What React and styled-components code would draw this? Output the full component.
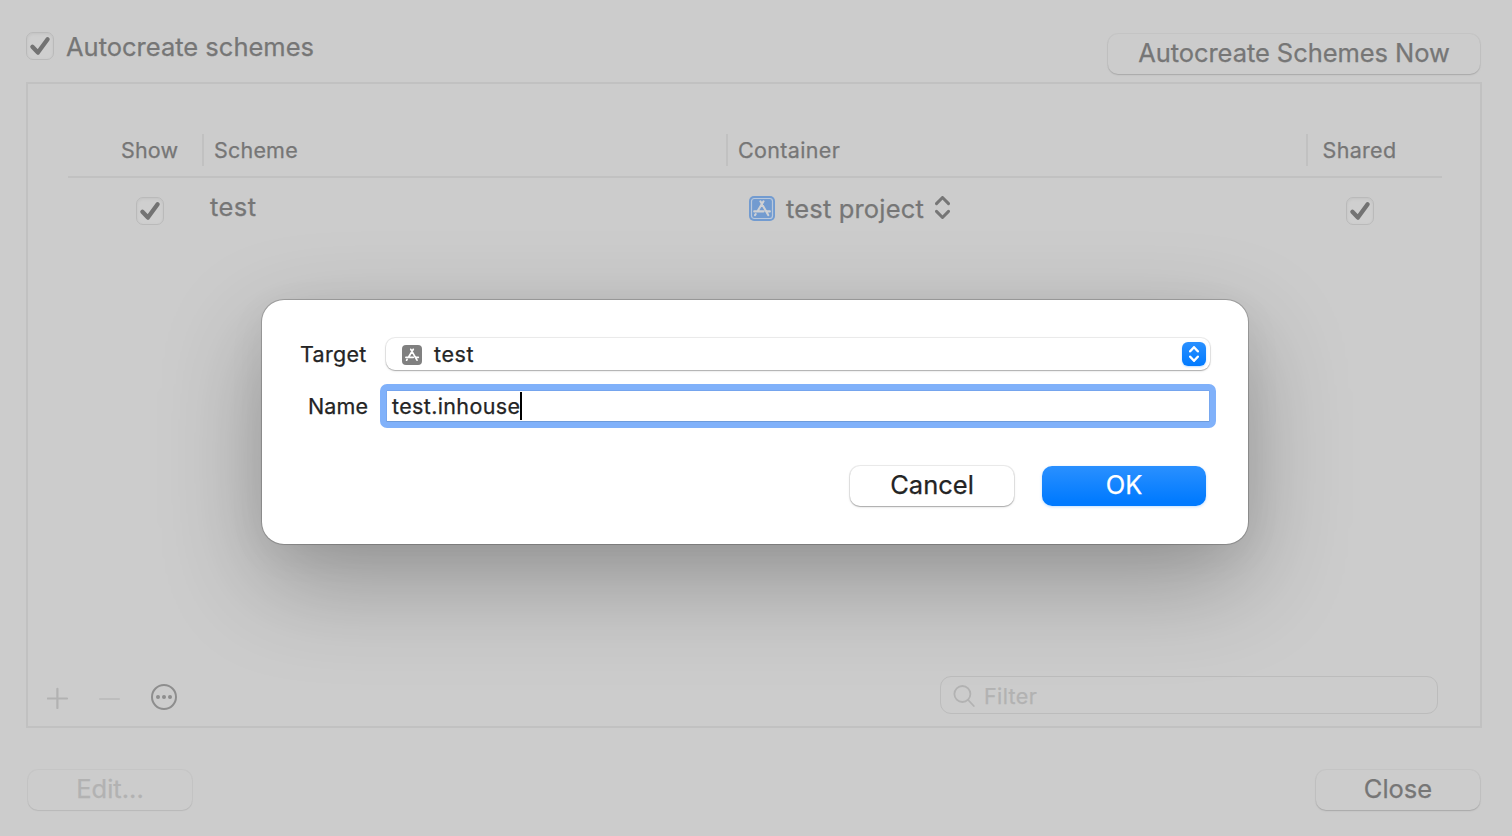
import React from "react";
import styled, { createGlobalStyle } from "styled-components";

const Global = createGlobalStyle`
  * { box-sizing: border-box; }
  body { margin: 0; background: #cccccc; overflow: hidden; }
`;

const Window = styled.div`
  position: relative;
  width: 1512px;
  height: 836px;
  padding: 32px 32px 25px 26px;
  display: flex;
  flex-direction: column;
  background: #cccccc;
  color: #767676;
  font-family: Inter, "Liberation Sans", sans-serif;
`;

const Text = styled.span`
  font-size: ${(p) => p.$size}px;
  font-weight: 440;
  letter-spacing: ${(p) => p.$track || 0}px;
  line-height: ${(p) => p.$line || 32}px;
  white-space: nowrap;
  -webkit-text-stroke: 0.25px currentColor;
`;

const TopBar = styled.header`
  display: flex;
  justify-content: space-between;
  align-items: flex-start;
  height: 50px;
`;

const CheckLabel = styled.label`
  display: flex;
  gap: 12px;
  height: 30px;
`;

const Box = styled.span`
  display: grid;
  place-items: center;
  width: 28px;
  height: 28px;
  border: 1px solid #bababa;
  border-radius: 7px;
  background: #cfcfcf;
  box-shadow: inset 0 1px 3px #c2c2c2;
`;

const Button = styled.button`
  display: flex;
  align-items: center;
  justify-content: center;
  width: ${(p) => p.$width}px;
  height: 40px;
  margin: 0;
  padding: 0 0 2px;
  border: 0;
  border-radius: 10px;
  font-family: inherit;
  color: ${(p) => (p.$faint ? "#b2b2b2" : "#767676")};
  background: #cccccc;
  box-shadow: 0 0 0 1px rgba(0, 0, 0, 0.03),
    0 1px 1px rgba(0, 0, 0, ${(p) => (p.$faint ? 0.05 : 0.1)}),
    0 1px 3px rgba(0, 0, 0, ${(p) => (p.$faint ? 0.02 : 0.05)});
`;

const AutoButton = styled(Button)`
  margin-top: 2px;
`;

const Panel = styled.section`
  display: flex;
  flex-direction: column;
  width: 1456px;
  height: 646px;
  padding: 50px 38px 12px 40px;
  border: 2px solid #c1c1c1;
`;

const Head = styled.div`
  display: flex;
  height: 44px;
  border-bottom: 2px solid #c1c1c1;
`;

const HeadCell = styled.div`
  width: ${(p) => p.$width}px;
  height: 32px;
  padding-left: ${(p) => p.$pad}px;
  border-left: ${(p) => (p.$first ? "0" : "2px solid #c1c1c1")};
`;

const Row = styled.div`
  display: flex;
  height: 60px;
`;

const Cell = styled.div`
  display: flex;
  align-items: flex-start;
  width: ${(p) => p.$width}px;
  padding: ${(p) => p.$top}px 0 0 ${(p) => p.$pad}px;
  gap: ${(p) => p.$gap || 0}px;
`;

const PanelFooter = styled.footer`
  display: flex;
  justify-content: space-between;
  align-items: center;
  margin-top: auto;
  padding: 0 4px 0 0;
  height: 38px;
  margin-left: -21px;
`;

const Tools = styled.div`
  display: flex;
  align-items: center;
  gap: 30px;
  padding-top: 3px;
`;

const FilterField = styled.div`
  display: flex;
  align-items: center;
  gap: 9px;
  width: 498px;
  height: 38px;
  padding: 1px 0 0 12px;
  border: 1px solid #bcbcbc;
  border-radius: 11px;
  color: #b2b2b2;
`;

const BottomBar = styled.footer`
  display: flex;
  justify-content: space-between;
  padding: 0 0 0 2px;
  margin-top: 42px;
`;

const Dialog = styled.div`
  position: absolute;
  left: 262px;
  top: 300px;
  width: 986px;
  height: 244px;
  padding: 38px 32px 38px 38px;
  display: flex;
  flex-direction: column;
  border-radius: 22px;
  background: #ffffff;
  color: #242424;
  box-shadow: 0 0 0 1px rgba(0, 0, 0, 0.17), 0 0 2px rgba(0, 0, 0, 0.12),
    0 36px 100px rgba(0, 0, 0, 0.28), 0 10px 40px rgba(0, 0, 0, 0.05);
`;

const Field = styled.div`
  display: flex;
  align-items: center;
  height: ${(p) => p.$height}px;
  margin-bottom: ${(p) => p.$after}px;
`;

const FieldLabel = styled.div`
  flex-shrink: 0;
  width: ${(p) => p.$width}px;
  padding-left: ${(p) => p.$pad}px;
  display: flex;
`;

const Select = styled.div`
  display: flex;
  align-items: center;
  width: 824px;
  height: 32px;
  padding: 0 4px 0 16px;
  border-radius: 9px;
  background: #ffffff;
  box-shadow: 0 0 0 1px rgba(0, 0, 0, 0.07), 0 1px 1px rgba(0, 0, 0, 0.2),
    0 1px 3px rgba(0, 0, 0, 0.1);
`;

const SelectValue = styled.div`
  flex: 1;
  display: flex;
  padding-left: 12px;
`;

const Stepper = styled.div`
  display: grid;
  place-items: center;
  width: 24px;
  height: 24px;
  border-radius: 6px;
  background: linear-gradient(#2a90ff, #007aff);
  box-shadow: 0 1px 2px rgba(0, 122, 255, 0.25);
`;

const Input = styled.div`
  display: flex;
  flex-shrink: 0;
  align-items: center;
  width: 836px;
  height: 44px;
  padding: 0 6px;
  border: 6px solid #80b1fa;
  border-radius: 7px;
  background: #ffffff;
  box-shadow: inset 0 -1px 0 #6d9bdb, inset 0 1px 0 #75a5ee,
    inset 1px 0 0 #78a8f0, inset -1px 0 0 #78a8f0;
`;

const Caret = styled.i`
  width: 2px;
  height: 28px;
  background: #000000;
`;

const Actions = styled.div`
  display: flex;
  justify-content: flex-end;
  gap: 28px;
  padding-right: 10px;
`;

const DialogButton = styled(Button)`
  color: #242424;
  background: #ffffff;
  box-shadow: 0 0 0 1px rgba(0, 0, 0, 0.07), 0 1px 1px rgba(0, 0, 0, 0.2),
    0 1px 3px rgba(0, 0, 0, 0.12);
`;

const PrimaryButton = styled(Button)`
  color: #ffffff;
  background: linear-gradient(#2a90ff, #007aff 90%);
  box-shadow: 0 1px 3px rgba(0, 122, 255, 0.25);
`;

const Check = () => (
  <Box>
    <svg width="26" height="26" viewBox="0 0 26 26" fill="none">
      <path d="M5.4 13.8 10.9 19.6 20.6 6.2" stroke="#737373" strokeWidth="4.3" strokeLinecap="round" strokeLinejoin="round" />
    </svg>
  </Box>
);

const Glyph = ({ color, width }) => (
  <g fill="none" stroke={color} strokeWidth={width} strokeLinecap="round">
    <path d="M8.8 4.3 15 15.2M11.3 4.3 6.5 12.2M3.9 12.3H11.3M5.1 14.4l-.5.8M13.9 12.3h2.4" />
  </g>
);

const ProjectIcon = () => (
  <svg width="26" height="26" viewBox="0 0 26 26">
    <rect width="26" height="25" rx="5" fill="#729bd0" />
    <rect x="2.5" y="2.5" width="21" height="20" rx="2.8" fill="none" stroke="#b9c8dc" strokeWidth="1.2" />
    <g transform="translate(.3 -.1) scale(1.26)"><Glyph color="#cfd1d4" width={1.7} /></g>
  </svg>
);

const TargetIcon = () => (
  <svg width="20" height="20" viewBox="0 0 20 20">
    <rect width="20" height="20" rx="4" fill="#808080" />
    <Glyph color="#ffffff" width={1.7} />
  </svg>
);

const TargetIconWrap = styled.span`
  display: flex;
  padding-top: 1px;
`;

const Chevrons = ({ w, h, color, stroke }) => (
  <svg width={w} height={h} viewBox={`0 0 ${w} ${h}`} fill="none" stroke={color} strokeWidth={stroke} strokeLinecap="round" strokeLinejoin="round">
    <path d={`M${stroke / 2} ${h * 0.33} ${w / 2} ${stroke / 2} ${w - stroke / 2} ${h * 0.33}`} />
    <path d={`M${stroke / 2} ${h * 0.67} ${w / 2} ${h - stroke / 2} ${w - stroke / 2} ${h * 0.67}`} />
  </svg>
);

export default function App() {
  return (
    <Window>
      <Global />
      <TopBar>
        <CheckLabel>
          <Check />
          <Text $size={25.5} $line={30}>Autocreate schemes</Text>
        </CheckLabel>
        <AutoButton $width={372}>
          <Text $size={25.5} $track={-0.06}>Autocreate Schemes Now</Text>
        </AutoButton>
      </TopBar>

      <Panel>
        <Head>
          <HeadCell $first $width={134} $pad={53}><Text $size={21.5} $track={0.15}>Show</Text></HeadCell>
          <HeadCell $width={524} $pad={10}><Text $size={21.5} $track={0.2}>Scheme</Text></HeadCell>
          <HeadCell $width={580} $pad={10}><Text $size={21.5} $track={0.35}>Container</Text></HeadCell>
          <HeadCell $width={136} $pad={14.6}><Text $size={21.5} $track={0.3}>Shared</Text></HeadCell>
        </Head>
        <Row>
          <Cell $width={134} $pad={68} $top={19}><Check /></Cell>
          <Cell $width={524} $pad={8} $top={13}><Text $size={25.5} $track={0.45}>test</Text></Cell>
          <Cell $width={580} $pad={23} $top={18} $gap={11}>
            <ProjectIcon />
            <Text $size={25.5} $line={26} $track={0.16}>test project</Text>
            <Chevrons w={15} h={23} color="#767676" stroke={3} />
          </Cell>
          <Cell $width={136} $pad={40} $top={19}><Check /></Cell>
        </Row>
        <PanelFooter>
          <Tools>
            <svg width="22" height="24" viewBox="0 0 22 24" stroke="#b2b2b2" strokeWidth="2.2" strokeLinecap="round">
              <path d="M.8 13.5H20M10.4 3.8V23" />
            </svg>
            <svg width="22" height="24" viewBox="0 0 22 24" stroke="#bdbdbd" strokeWidth="2" strokeLinecap="round">
              <path d="M1 14H20" />
            </svg>
            <svg width="26" height="26" viewBox="0 0 26 26" fill="#8e8e8e">
              <circle cx="13" cy="13" r="12" fill="none" stroke="#8e8e8e" strokeWidth="2" />
              <circle cx="7" cy="13" r="2" /><circle cx="13" cy="13" r="2" /><circle cx="19" cy="13" r="2" />
            </svg>
          </Tools>
          <FilterField>
            <svg width="22" height="24" viewBox="0 0 22 24" fill="none" stroke="#b2b2b2" strokeWidth="1.8" strokeLinecap="round">
              <circle cx="9.4" cy="10" r="8" />
              <path d="M15.2 16 20.8 22" />
            </svg>
            <Text $size={21.5} $track={0.4}>Filter</Text>
          </FilterField>
        </PanelFooter>
      </Panel>

      <BottomBar>
        <Button $width={164} $faint><Text $size={25.5}>Edit...</Text></Button>
        <Button $width={164}><Text $size={25.5}>Close</Text></Button>
      </BottomBar>

      <Dialog>
        <Field $height={32} $after={14}>
          <FieldLabel $width={86} $pad={0}><Text $size={21.5} $track={0.3}>Target</Text></FieldLabel>
          <Select>
            <TargetIconWrap><TargetIcon /></TargetIconWrap>
            <SelectValue><Text $size={21.5} $track={0.6}>test</Text></SelectValue>
            <Stepper><Chevrons w={10} h={16} color="#ffffff" stroke={2.4} /></Stepper>
          </Select>
        </Field>
        <Field $height={44} $after={38}>
          <FieldLabel $width={80} $pad={8}><Text $size={21.5} $track={0.1}>Name</Text></FieldLabel>
          <Input>
            <Text $size={21.5} $track={0.36}>test.inhouse</Text>
            <Caret />
          </Input>
        </Field>
        <Actions>
          <DialogButton $width={164}><Text $size={25.5}>Cancel</Text></DialogButton>
          <PrimaryButton $width={164}><Text $size={25.5}>OK</Text></PrimaryButton>
        </Actions>
      </Dialog>
    </Window>
  );
}
